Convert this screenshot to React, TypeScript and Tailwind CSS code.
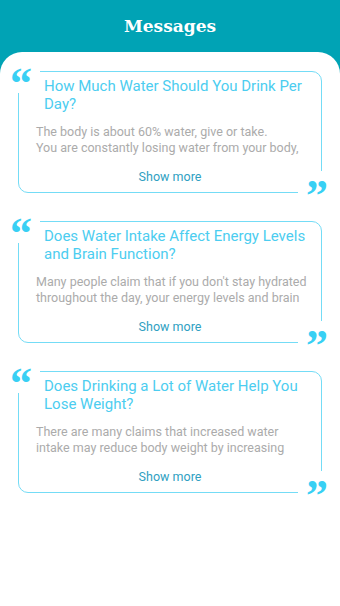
import React from 'react';

interface Message {
  title: string;
  body: string;
}

// only the two lines the list shows of each text
const messages: Message[] = [
  {
    title: 'How Much Water Should You Drink Per Day?',
    body: 'The body is about 60% water, give or take.\nYou are constantly losing water from your body,',
  },
  {
    title: 'Does Water Intake Affect Energy Levels and Brain Function?',
    body: "Many people claim that if you don't stay hydrated\nthroughout the day, your energy levels and brain",
  },
  {
    title: 'Does Drinking a Lot of Water Help You Lose Weight?',
    body: 'There are many claims that increased water\nintake may reduce body weight by increasing',
  },
];

const MessageCard: React.FC<{ message: Message }> = ({ message }) => {
  return (
    <div className="relative h-[122px] rounded-[10px] border-[1.5px] border-[#74dcf6] flex flex-col">
      {/* opening quote sits over the top-left corner */}
      <div className="absolute -left-[3px] -top-[3px] w-[24px] h-[24px] bg-white">
        <span className="absolute -left-[6px] -top-[7px] text-[44px] leading-none font-bold text-[#38d0f4] [font-family:'Liberation_Serif',serif]">
          “
        </span>
      </div>
      {/* closing quote over the bottom-right corner */}
      <div className="absolute -right-[3px] -bottom-[3px] w-[26px] h-[24px] bg-white">
        <span className="absolute left-[8px] top-[3px] text-[44px] leading-none font-bold text-[#38d0f4] [font-family:'Liberation_Serif',serif]">
          ”
        </span>
      </div>

      <h3 className="pl-[25px] pr-[12px] pt-[5px] text-[15px] leading-[18px] text-[#4ccdf0]">
        {message.title}
      </h3>
      <p className="mt-[11px] pl-[17px] pr-[8px] whitespace-pre-line text-[12.5px] leading-[16px] text-[#ababab]">
        {message.body}
      </p>
      <button className="mt-auto mb-[7px] self-center text-[12.5px] leading-[16px] text-[#2f9fc2]">
        Show more
      </button>
    </div>
  );
};

export default function App() {
  return (
    <div className="w-full h-[606px] bg-[#00a3b5] flex flex-col [font-family:Roboto,'Noto_Sans',sans-serif]">
      <div className="h-[52px] flex items-center justify-center pt-[2px]">
        <h1 className="text-[17px] font-bold text-white [font-family:'DejaVu_Serif',serif]">Messages</h1>
      </div>
      <div className="flex-1 bg-white rounded-t-[22px] pt-[19px] px-[18px] flex flex-col gap-[28px]">
        {messages.map((m) => (
          <MessageCard key={m.title} message={m} />
        ))}
      </div>
    </div>
  );
}
